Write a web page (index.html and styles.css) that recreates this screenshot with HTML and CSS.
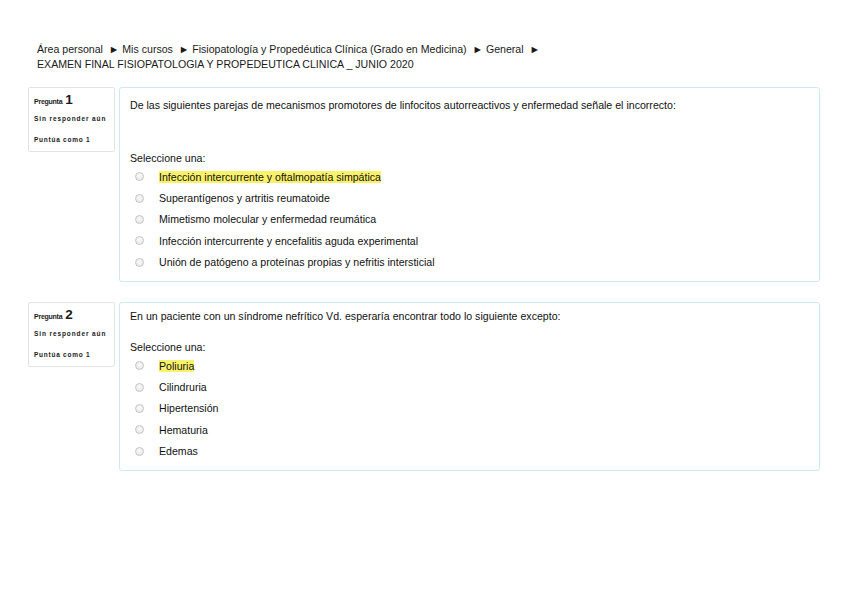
FILE: index.html
```html
<!DOCTYPE html>
<html lang="es">
<head>
<meta charset="utf-8">
<title>Examen</title>
<link rel="stylesheet" href="styles.css">
</head>
<body>
<div class="page">
  <div class="breadcrumb">
    <div>Área personal &nbsp;► Mis cursos &nbsp;► Fisiopatología y Propedéutica Clínica (Grado en Medicina) &nbsp;► General &nbsp;►</div>
    <div>EXAMEN FINAL FISIOPATOLOGIA Y PROPEDEUTICA CLINICA _ JUNIO 2020</div>
  </div>

  <div class="question">
    <div class="info">
      <div class="qno"><span class="lbl">Pregunta</span> <span class="num">1</span></div>
      <div class="state">Sin responder aún</div>
      <div class="grade">Puntúa como 1</div>
    </div>
    <div class="content">
      <p class="qtext first">De las siguientes parejas de mecanismos promotores de linfocitos autorreactivos y enfermedad señale el incorrecto:</p>
      <p class="prompt long">Seleccione una:</p>
      <ul class="answers">
        <li><span class="radio"></span><span class="hl">Infección intercurrente y oftalmopatía simpática</span></li>
        <li><span class="radio"></span><span>Superantígenos y artritis reumatoide</span></li>
        <li><span class="radio"></span><span>Mimetismo molecular y enfermedad reumática</span></li>
        <li><span class="radio"></span><span>Infección intercurrente y encefalitis aguda experimental</span></li>
        <li><span class="radio"></span><span>Unión de patógeno a proteínas propias y nefritis intersticial</span></li>
      </ul>
    </div>
  </div>

  <div class="question">
    <div class="info">
      <div class="qno"><span class="lbl">Pregunta</span> <span class="num">2</span></div>
      <div class="state">Sin responder aún</div>
      <div class="grade">Puntúa como 1</div>
    </div>
    <div class="content">
      <p class="qtext">En un paciente con un síndrome nefrítico Vd. esperaría encontrar todo lo siguiente excepto:</p>
      <p class="prompt">Seleccione una:</p>
      <ul class="answers">
        <li><span class="radio"></span><span class="hl">Poliuria</span></li>
        <li><span class="radio"></span><span>Cilindruria</span></li>
        <li><span class="radio"></span><span>Hipertensión</span></li>
        <li><span class="radio"></span><span>Hematuria</span></li>
        <li><span class="radio"></span><span>Edemas</span></li>
      </ul>
    </div>
  </div>
</div>
</body>
</html>
```

FILE: styles.css
```css
html, body {
  margin: 0;
  padding: 0;
  background: #ffffff;
}

body {
  font-family: "Liberation Sans", Arial, sans-serif;
  font-size: 10.6px;
  color: #111111;
}

.page {
  padding: 42px 28px 0 28px;
}

.breadcrumb {
  padding-left: 9px;
  line-height: 15px;
  letter-spacing: 0;
  color: #1a1a1a;
}

.question {
  display: flex;
  align-items: flex-start;
  gap: 4px;
  margin-top: 15px;
}

.question + .question {
  margin-top: 20px;
}

.info {
  box-sizing: border-box;
  width: 87px;
  height: 65px;
  flex: none;
  border: 1px solid #e3e3e3;
  border-radius: 2px;
  padding: 4px 0 0 5px;
  font-weight: bold;
  color: #1a1a1a;
}

.qno {
  line-height: 15px;
  height: 15px;
}

.qno .lbl {
  font-size: 7px;
  letter-spacing: -0.25px;
}

.qno .num {
  font-size: 13.5px;
}

.state {
  font-size: 6.5px;
  letter-spacing: 0.9px;
  line-height: 10px;
  margin-top: 7px;
}

.grade {
  font-size: 6.5px;
  letter-spacing: 0.75px;
  line-height: 10px;
  margin-top: 11px;
}

.content {
  box-sizing: border-box;
  width: 702px;
  border: 1px solid #cde9f1;
  border-radius: 3px;
  padding: 6px 10px 8px 10px;
}

.qtext {
  margin: 0;
  line-height: 14px;
}

.qtext.first {
  margin-top: 4px;
}

.prompt {
  margin: 17px 0 0 0;
  line-height: 14px;
}

.prompt.long {
  margin-top: 39px;
}

.answers {
  list-style: none;
  margin: 1px 0 0 0;
  padding: 0;
}

.answers li {
  display: flex;
  align-items: center;
  height: 21.4px;
}

.radio {
  box-sizing: border-box;
  width: 9px;
  height: 9px;
  border-radius: 50%;
  border: 1px solid #c4c4c4;
  background: radial-gradient(circle at 50% 40%, #fafafa 0%, #e6e6e6 100%);
  margin-left: 5px;
  margin-right: 15px;
  flex: none;
}

.hl {
  background: #fbf26a;
  line-height: 12px;
}
```
